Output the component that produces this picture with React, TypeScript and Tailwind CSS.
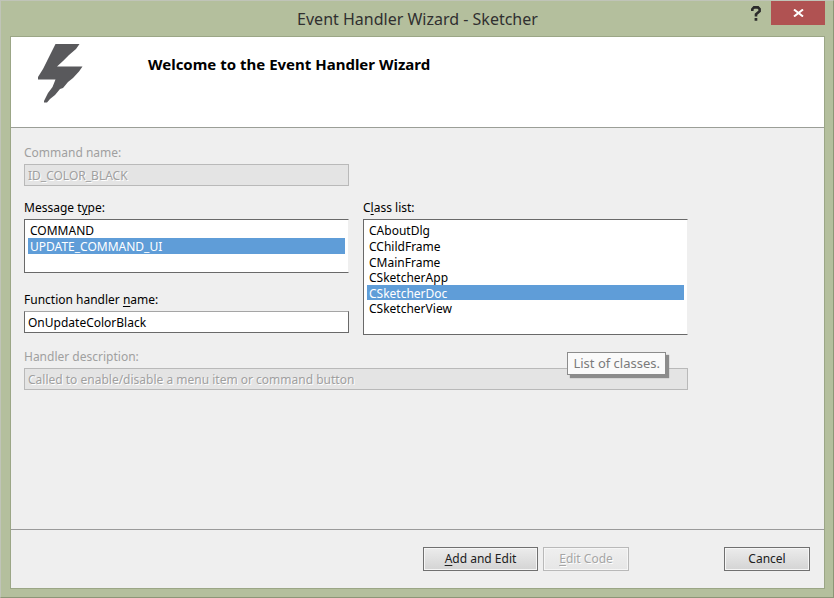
import type { ReactNode } from "react";

const messageTypes = ["COMMAND", "UPDATE_COMMAND_UI"];
const classes = ["CAboutDlg", "CChildFrame", "CMainFrame", "CSketcherApp", "CSketcherDoc", "CSketcherView"];

const labelStyle = "mb-[2px] block leading-[18px]";
const fieldStyle = "block h-[22px] w-full border px-[3px]";
const disabledField = "border-[#b9b9b9] bg-[#e4e4e4] text-[#a0a0a0] [text-shadow:1px_1px_0_#fff]";
const listStyle =
  "block w-full appearance-none overflow-hidden rounded-none border border-[#696969] border-r-[#efefef] bg-white px-[3px] py-[2px] outline-none";
const optionStyle =
  "h-4 min-h-0 px-[2px] py-0 leading-[13px] nth-[2n+3]:h-[15px] checked:bg-[#5f9dd8] checked:text-white";
const buttonStyle = "h-[24px] border shadow-[inset_0_0_0_1px_#f6f6f6] bg-linear-to-b";
const activeButton = "border-[#707070] from-[#ececec] to-[#d4d4d4] text-[#202020]";

function Key({ children }: { children: ReactNode }) {
  return <span className="underline underline-offset-2">{children}</span>;
}

function ListBox({ id, items, selected, className }: { id: string; items: string[]; selected: string; className: string }) {
  return (
    <select id={id} size={items.length} defaultValue={selected} className={`${listStyle} ${className}`}>
      {items.map((item) => (
        <option key={item} className={optionStyle}>
          {item}
        </option>
      ))}
    </select>
  );
}

export default function App() {
  return (
    <div className="flex min-h-screen flex-col border border-t-[#c0c4b8] border-r-[#8c9577] border-b-[#8c9577] border-l-[#c0c4b8] bg-[#b4bf9d] pr-[8px] pb-[8px] pl-[9px] font-['Noto_Sans',sans-serif] text-[12px] text-black">
      <header className="relative flex h-[35px] items-center justify-center">
        <h1 className="text-[16px] text-[#303030]">Event Handler Wizard - Sketcher</h1>
        <div className="absolute top-0 right-0 flex">
          <button aria-label="Help" className="grid h-6 w-[31px] place-items-center">
            <svg width="10" height="15" viewBox="0 0 10 15" fill="none" stroke="#2b2b2b" strokeWidth="2.6">
              <path d="M1.3 5V3.2L3 1.4H7L8.6 3V5.2L5 8.4V10.5M3.6 13.4H6.3" />
            </svg>
          </button>
          <button aria-label="Close" className="grid h-6 w-[54px] place-items-center bg-[#b05252]">
            <svg width="11" height="8" viewBox="0 0 11 8" stroke="#fff" strokeWidth="2">
              <path d="M1 0.5L10 7.5M10 0.5L1 7.5" />
            </svg>
          </button>
        </div>
      </header>

      <main className="flex flex-1 flex-col border border-[#9ba686] bg-[#efefef]">
        <section className="flex h-[91px] border-b border-[#9b9e97] bg-white pt-[6px] pl-[26px]">
          <svg width="46" height="60" viewBox="0 0 46 60" className="shrink-0" fill="#59595c">
            <path d="M18.5 1H42.5L39 6L32 12L26 18L20 23.5H45.5L42 28.5L36 35L31 39L26 45L23 46L18 52L13 56L10 59.500H7V58L11 50L15.500 44L18.500 36.500H1V34L6 26L10.500 17Z" />
          </svg>
          <h2 className="mt-[11px] ml-[65px] text-[15px] leading-5 font-bold">Welcome to the Event Handler Wizard</h2>
        </section>

        <form className="flex flex-1 flex-col">
          <div className="flex-1 px-[13px] pt-4">
            <div className="grid max-w-[664px] grid-cols-2 gap-x-[14px] gap-y-[13px]">
              <div>
                <label htmlFor="command" className={`${labelStyle} text-[#a0a0a0]`}>Command name:</label>
                <input id="command" disabled defaultValue="ID_COLOR_BLACK" className={`${fieldStyle} ${disabledField}`} />
              </div>

              <div className="col-start-1 flex flex-col gap-[18px]">
                <div>
                  <label htmlFor="message" className={labelStyle}>Message t<Key>y</Key>pe:</label>
                  <ListBox id="message" items={messageTypes} selected="UPDATE_COMMAND_UI" className="h-[54px]" />
                </div>
                <div>
                  <label htmlFor="handler" className={labelStyle}>Function handler <Key>n</Key>ame:</label>
                  <input id="handler" defaultValue="OnUpdateColorBlack" className={`${fieldStyle} border-[#696969] border-t-[#a5a5a5] bg-white`} />
                </div>
              </div>

              <div className="relative">
                <label htmlFor="classes" className={labelStyle}>C<Key>l</Key>ass list:</label>
                <ListBox id="classes" items={classes} selected="CSketcherDoc" className="h-[116px]" />
                <div role="tooltip" className="absolute top-full right-[22px] mt-[17px] border border-[#8c8c8c] bg-[#fafafa] px-[5px] text-[13px] leading-[21px] text-[#7b7b7b] shadow-[3px_3px_1px_#8c8c8c]">
                  List of classes.
                </div>
              </div>

              <div className="col-span-2">
                <label htmlFor="description" className={`${labelStyle} text-[#a0a0a0]`}>Handler description:</label>
                <input id="description" disabled defaultValue="Called to enable/disable a menu item or command button" className={`${fieldStyle} ${disabledField}`} />
              </div>
            </div>
          </div>

          <footer className="flex h-[59px] justify-end border-t border-[#9a9a9a] pt-[17px] pr-[14px]">
            <button type="button" className={`${buttonStyle} ${activeButton} w-[115px]`}><Key>A</Key>dd and Edit</button>
            <button type="button" disabled className={`${buttonStyle} ml-[5px] w-[86px] border-[#b9b9b9] from-[#efefef] to-[#e6e6e6] text-[#a5a5a5] [text-shadow:1px_1px_0_#fff]`}><Key>E</Key>dit Code</button>
            <button type="button" className={`${buttonStyle} ${activeButton} ml-[95px] w-[86px]`}>Cancel</button>
          </footer>
        </form>
      </main>
    </div>
  );
}
